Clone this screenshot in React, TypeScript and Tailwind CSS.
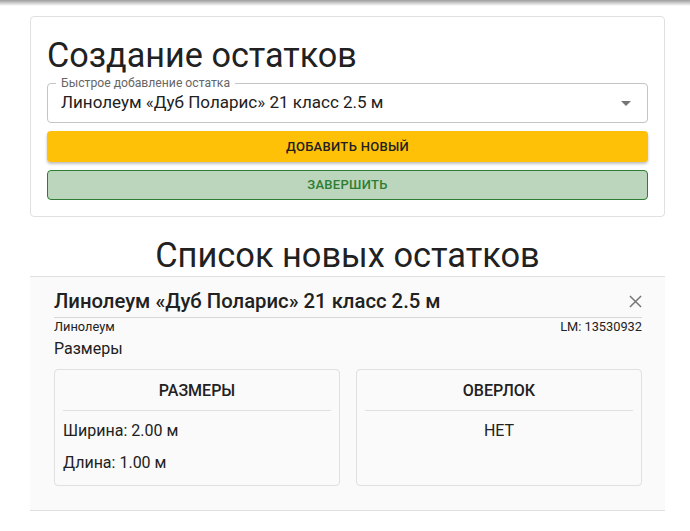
export default function App() {
  return (
    <div className="relative min-h-[531px] bg-white text-[#212121]" style={{ fontFamily: "Roboto, 'Noto Sans', sans-serif" }}>
      <div className="h-[6px] bg-gradient-to-b from-[#9e9e9e] to-white" />
      <div className="pl-[30px] pr-[25px] pt-[10px]">
        <div className="rounded border border-[#e0e0e0] px-4 pt-[18px] pb-4">
          <h1 className="text-[34.2px] leading-[40px] font-normal">Создание остатков</h1>
          <div className="relative mt-[8px] flex h-[40px] items-center rounded border border-[#c4c4c4] px-[13px]">
            <span className="absolute -top-[8px] left-[8px] bg-white px-[5px] text-[12.2px] leading-[14px] text-[#666]">
              Быстрое добавление остатка
            </span>
            <span className="flex-1 text-[17px]">Линолеум «Дуб Поларис» 21 класс 2.5 м</span>
            <svg width="24" height="24" viewBox="0 0 24 24" className="mr-[-4px] text-[#757575]">
              <path d="M7 10l5 5 5-5z" fill="currentColor" />
            </svg>
          </div>
          <button className="mt-[8px] flex h-[31px] w-full items-center justify-center rounded bg-[#ffc107] text-[13px] font-medium uppercase tracking-[0.3px] text-[#212121] shadow-[0_2px_3px_rgba(0,0,0,0.25)]">
            Добавить новый
          </button>
          <button className="mt-[8px] flex h-[30px] w-full items-center justify-center rounded border border-[#2e7d32] bg-[#bbd6bc] text-[13px] font-medium uppercase tracking-[0.3px] text-[#2e7d32]">
            Завершить
          </button>
        </div>
        <h2 className="mt-[18px] text-center text-[34.4px] leading-[40px] font-normal">Список новых остатков</h2>
        <div className="mt-[1px] border-y border-[#e0e0e0] bg-[#fafafa] pl-6 pr-[23px] pt-[11px] pb-[24px]">
          <div className="flex items-center justify-between border-b border-[#d6d6d6] pb-[3px]">
            <span className="text-[20.3px] font-medium leading-[26px]">Линолеум «Дуб Поларис» 21 класс 2.5 м</span>
            <svg width="13" height="13" viewBox="0 0 14 14" className="mr-0 text-[#757575]">
              <path d="M1 1L13 13M13 1L1 13" stroke="currentColor" strokeWidth="1.6" />
            </svg>
          </div>
          <div className="mt-[1px] flex justify-between text-[12.8px] leading-[16px]">
            <span>Линолеум</span>
            <span>LM: 13530932</span>
          </div>
          <div className="mt-[4px] text-[16px] leading-[20px]">Размеры</div>
          <div className="mt-[10px] grid grid-cols-2 gap-4">
            <div className="h-[117px] rounded border border-[#e0e0e0] px-2">
              <div className="border-b border-[#e0e0e0] pt-[9px] pb-[7px] text-center text-[16px] font-medium">РАЗМЕРЫ</div>
              <div className="mt-[10px] text-[16px] leading-[20px]">Ширина: 2.00 м</div>
              <div className="mt-[12px] text-[16px] leading-[20px]">Длина: 1.00 м</div>
            </div>
            <div className="h-[117px] rounded border border-[#e0e0e0] px-2">
              <div className="border-b border-[#e0e0e0] pt-[9px] pb-[7px] text-center text-[16px] font-medium">ОВЕРЛОК</div>
              <div className="mt-[10px] text-center text-[16px] leading-[20px]">НЕТ</div>
            </div>
          </div>
        </div>
      </div>
    </div>
  );
}
